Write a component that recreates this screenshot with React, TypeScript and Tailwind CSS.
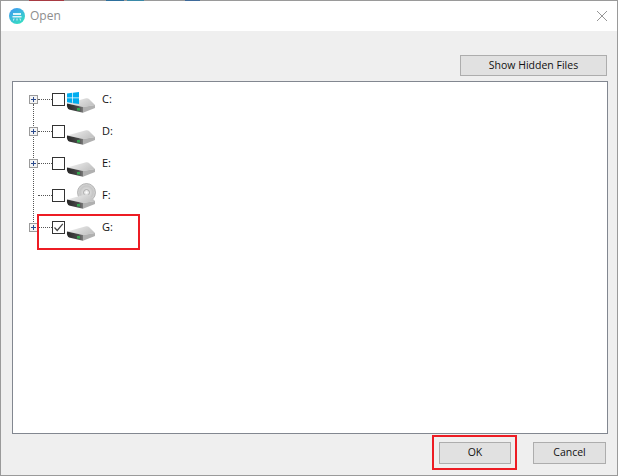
import React from "react";

const font = { fontFamily: '"Open Sans", "Liberation Sans", Arial, sans-serif' };

function Expander({ show = true }: { show?: boolean }) {
  return (
    <div className="w-[9px] h-[9px] shrink-0 relative">
      {show && (
        <div className="w-[9px] h-[9px] border border-[#9a9a9a] bg-[#f4f4f4] flex items-center justify-center">
          <svg width="7" height="7" viewBox="0 0 7 7">
            <path d="M1 3.5H6M3.5 1V6" stroke="#2b4a8c" strokeWidth="1" />
          </svg>
        </div>
      )}
    </div>
  );
}

function Drive({ className = "" }: { className?: string }) {
  return (
    <svg width="30" height="15" viewBox="0 0 30 15" className={className}>
      <defs>
        <linearGradient id="top" x1="0" y1="0" x2="1" y2="0.5">
          <stop offset="0" stopColor="#f4f4f4" />
          <stop offset="1" stopColor="#c4c4c4" />
        </linearGradient>
        <linearGradient id="front" x1="0" y1="0" x2="1" y2="0">
          <stop offset="0" stopColor="#262626" />
          <stop offset="0.7" stopColor="#4a4a4a" />
          <stop offset="1" stopColor="#7a7a7a" />
        </linearGradient>
      </defs>
      <path d="M1 5.5 L20 0.3 Q22 0 23 1 L29 7 L17 9 Z" fill="url(#top)" />
      <path d="M1 5.5 L17 9 L17 14.7 L3 11.5 Q0.5 10 1 5.5 Z" fill="url(#front)" />
      <path d="M17 9 L29 7 L29 10 L17 14.7 Z" fill="#b0b0b0" />
      <rect x="11" y="10" width="3" height="2.5" fill="#35a34f" />
    </svg>
  );
}

function WinLogo() {
  return (
    <svg width="12" height="12" viewBox="0 0 12 12" className="absolute left-[1px] top-[-6px]">
      <path d="M0 1.6 L5.3 .8 V5.5 H0 Z M6 .7 L12 0 V5.5 H6 Z M0 6.2 H5.3 V11 L0 10.3 Z M6 6.2 H12 V12 L6 11.2 Z" fill="#00adef" />
    </svg>
  );
}

function Disc() {
  return (
    <svg width="19" height="19" viewBox="0 0 19 19" className="absolute left-[11px] top-[-11px]">
      <defs>
        <radialGradient id="disc" cx="0.5" cy="0.5" r="0.6">
          <stop offset="0" stopColor="#f2f2f2" />
          <stop offset="0.6" stopColor="#c6c6c6" />
          <stop offset="1" stopColor="#e4e4e4" />
        </radialGradient>
      </defs>
      <circle cx="9.5" cy="9.5" r="9" fill="url(#disc)" stroke="#9c9c9c" strokeWidth="0.7" />
      <circle cx="9.5" cy="9.5" r="3" fill="#e8e8e8" stroke="#9a9a9a" strokeWidth="0.8" />
      <circle cx="9.5" cy="9.5" r="1" fill="#fff" />
    </svg>
  );
}

function Row({ label, expand = true, checked = false, kind }: { label: string; expand?: boolean; checked?: boolean; kind?: "win" | "disc" }) {
  return (
    <div className="h-[32px] flex items-start">
      <div className="flex items-center h-[14px]">
        <Expander show={expand} />
        <div className="w-[14px] border-t border-dotted border-[#555]" />
        <div className="w-[13px] h-[13px] border border-[#333] bg-white flex items-center justify-center shrink-0">
          {checked && (
            <svg width="11" height="11" viewBox="0 0 11 11">
              <path d="M1.5 5.5 L4.2 8.5 L9.8 1.8" stroke="#444" strokeWidth="1.2" fill="none" />
            </svg>
          )}
        </div>
      </div>
      <div className="relative w-[30px] h-[15px] ml-[1px] mt-[6px] shrink-0">
        {kind === "disc" && <Disc />}
        <Drive className="relative" />
        {kind === "win" && <WinLogo />}
      </div>
      <span className="ml-[6px] text-[11px] leading-[13px] font-medium text-[#111]">{label}</span>
    </div>
  );
}

export default function App() {
  return (
    <div className="relative w-[619px] h-[476px] overflow-hidden bg-white" style={font}>
      <div className="w-[618px] h-[476px] border border-[#9a9a9a] bg-[#efefef] flex flex-col">
        <div className="h-[30px] bg-white flex items-center pl-[8px] pr-[9px] shrink-0">
          <svg width="16" height="16" viewBox="0 0 16 16">
            <defs>
              <linearGradient id="logo" x1="0.2" y1="0" x2="0.8" y2="1">
                <stop offset="0" stopColor="#3f9bf0" />
                <stop offset="1" stopColor="#35e0c0" />
              </linearGradient>
            </defs>
            <circle cx="8" cy="8" r="8" fill="url(#logo)" />
            <path d="M4 5 H12 V7 H4 Z M3.5 8 H12.5 V9.5 H3.5 Z" fill="#dff4fb" />
            <path d="M5 10.5 L4.5 12.5 M8 10.5 V12.5 M11 10.5 L11.5 12.5" stroke="#dff4fb" strokeWidth="1" />
          </svg>
          <span className="ml-[5px] text-[12px] text-[#8d8d8d]">Open</span>
          <svg width="12" height="12" viewBox="0 0 12 12" className="ml-auto">
            <path d="M1 1 L11 11 M11 1 L1 11" stroke="#8a8a8a" strokeWidth="0.9" />
          </svg>
        </div>
        <div className="flex-1 flex flex-col pl-[11px] pr-[9px]">
          <div className="flex justify-end mt-[24px] pr-[1px]">
            <button className="w-[147px] h-[21px] border border-[#adadad] bg-[#e1e1e1] text-[10.5px] text-[#111]">Show Hidden Files</button>
          </div>
          <div className="relative mt-[5px] h-[353px] border border-[#828790] bg-white pl-[16px] pt-[10px]">
            <div className="absolute left-[20px] top-[22px] h-[120px] border-l border-dotted border-[#555]" />
            <div className="relative"><Row label="C:" kind="win" /><Row label="D:" /><Row label="E:" /><Row label="F:" expand={false} kind="disc" /><Row label="G:" checked /></div>
          </div>
          <div className="flex justify-end gap-[22px] mt-[8px] pr-[2px]">
            <button className="w-[72px] h-[22px] border border-[#adadad] bg-[#e1e1e1] text-[10.5px] text-[#111]">OK</button>
            <button className="w-[73px] h-[22px] border border-[#adadad] bg-[#e1e1e1] text-[10.5px] text-[#111]">Cancel</button>
          </div>
        </div>
      </div>
      <div className="absolute left-[29px] top-0 w-[35px] h-px bg-[#a83a42]" />
      <div className="absolute left-[106px] top-0 w-[18px] h-px bg-[#2d6f9c]" />
      <div className="absolute left-[127px] top-0 w-[17px] h-px bg-[#3a8aa8]" />
      <div className="absolute left-[185px] top-0 w-[15px] h-px bg-[#3f6a9a]" />
      <div className="absolute left-[37px] top-[214px] w-[103px] h-[36px] border-2 border-[#ed1c24]" />
      <div className="absolute left-[432px] top-[435px] w-[85px] h-[35px] border-2 border-[#ed1c24]" />
    </div>
  );
}
